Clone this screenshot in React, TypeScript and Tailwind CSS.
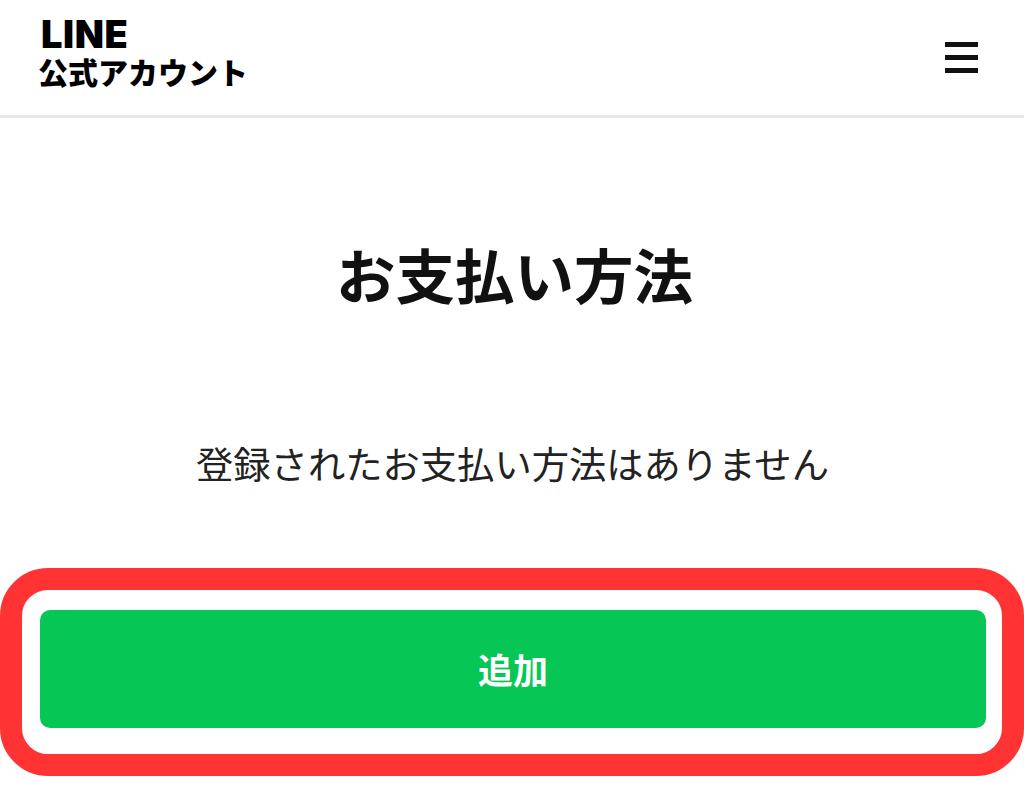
export default function App() {
  return (
    <div className="w-[1024px] h-[811px] bg-white overflow-hidden font-['Noto_Sans_CJK_JP','Noto_Sans',sans-serif] text-[#111111]">
      {/* Header */}
      <header className="h-[118px] border-b-[3px] border-[#e8e8e8] flex items-start justify-between pl-[39px] pr-[46px]">
        <div className="pt-[14px]">
          <div className="font-['Inter',sans-serif] font-black text-[38px] leading-[40px] ml-[2px] tracking-[0.6px] text-black">LINE</div>
          <div className="font-black text-[30px] leading-[34px] -ml-[1px] text-black">公式アカウント</div>
        </div>
        <div className="pt-[42px] flex flex-col gap-[8px]">
          <div className="w-[33px] h-[5px] bg-[#111111]" />
          <div className="w-[33px] h-[5px] bg-[#111111]" />
          <div className="w-[33px] h-[5px] bg-[#111111]" />
        </div>
      </header>

      {/* Contenido */}
      <h1 className="mt-[112px] pl-[5px] text-center font-bold text-[59.5px] leading-[86px] h-[86px]">お支払い方法</h1>
      <p className="mt-[120px] pl-[1px] text-center text-[37.3px] leading-[54px] text-[#222222]">登録されたお支払い方法はありません</p>

      {/* Botón con marco rojo */}
      <div className="mt-[78px] h-[208px] border-[22px] border-[#ff3333] rounded-[48px] pt-[20px] pl-[18px] pr-[16px]">
        <button className="w-full h-[118px] bg-[#06c755] rounded-[10px] text-white font-bold text-[35px]">追加</button>
      </div>
    </div>
  );
}
